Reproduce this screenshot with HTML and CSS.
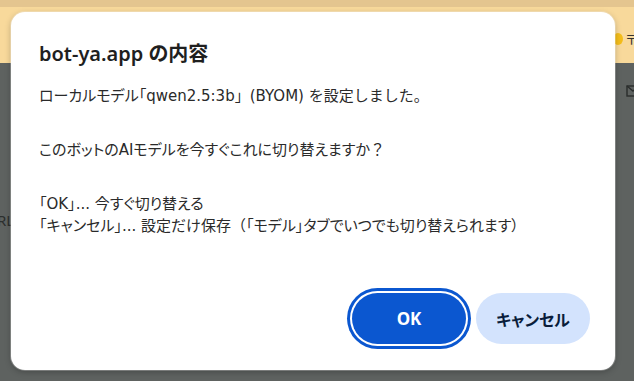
FILE: index.html
```html
<!DOCTYPE html>
<html lang="ja">
<head>
<meta charset="utf-8">
<title>bot-ya.app</title>
<link rel="stylesheet" href="styles.css">
</head>
<body>
<div class="page">
  <div class="topband"></div>
  <div class="banner">
    <span class="banner-dot"></span>
    <span class="banner-glyph">〒</span>
  </div>
  <div class="main">
    <span class="side-label">RL</span>
    <svg class="mail-icon" width="14" height="12" viewBox="0 0 14 12"><rect x="1" y="1" width="12" height="10" fill="none" stroke="#2a2d2c" stroke-width="1.4"/><path d="M1 1 L7 6 L13 1" fill="none" stroke="#2a2d2c" stroke-width="1.4"/></svg>
  </div>
</div>

<div class="dialog" role="alertdialog">
  <h1 class="dialog-title">bot-ya.app の内容</h1>
  <div class="dialog-body">
    <div class="line">ローカルモデル「qwen2.5:3b<span class="full">」</span>(BYOM) <span class="full">を設定しました。</span></div>
    <div class="blank"></div>
    <div class="line">このボットのAIモデルを今すぐこれに切り替えますか<span class="full">？</span></div>
    <div class="blank"></div>
    <div class="line">「OK」... 今すぐ切り替える</div>
    <div class="line">「キャンセル」... <span class="full">設定だけ</span>保存<span class="full">（</span>「モデル」タブでいつでも切り替えられます）</div>
  </div>
  <div class="dialog-actions">
    <button class="btn btn-ok">OK</button>
    <button class="btn btn-cancel">キャンセル</button>
  </div>
</div>
</body>
</html>
```

FILE: styles.css
```css
html, body {
  margin: 0;
  padding: 0;
}
body {
  width: 634px;
  height: 381px;
  overflow: hidden;
  position: relative;
  font-family: "Noto Sans", "Noto Sans CJK JP", sans-serif;
  background: #5e6260;
}
.page {
  display: flex;
  flex-direction: column;
  height: 381px;
}
.topband {
  height: 7px;
  background: #e4c58f;
}
.banner {
  height: 56px;
  background: #f8d99b;
  position: relative;
}
.banner-dot {
  position: absolute;
  left: 613px;
  top: 26px;
  width: 10px;
  height: 12px;
  border-radius: 50%;
  background: #f4bd1a;
}
.banner-glyph {
  position: absolute;
  left: 625px;
  top: 22px;
  font-size: 13px;
  color: #333;
}
.main {
  flex: 1;
  background: #5e6260;
  position: relative;
}
.side-label {
  position: absolute;
  left: -3px;
  top: 147px;
  font-size: 15px;
  color: #2c2f2e;
}
.mail-icon {
  position: absolute;
  left: 626px;
  top: 22px;
}
.dialog {
  position: absolute;
  left: 11px;
  top: 12px;
  width: 604px;
  height: 358px;
  box-sizing: border-box;
  background: #ffffff;
  border-radius: 14px;
  box-shadow: 0 0 0 1px rgba(255,255,255,0.25), 0 2px 6px rgba(0,0,0,0.25);
  padding: 28px 25px 26px 28px;
  display: flex;
  flex-direction: column;
}
.dialog-title {
  margin: 0;
  font-size: 20px;
  font-weight: 600;
  line-height: 28px;
  color: #1f1f1f;
  font-feature-settings: "palt";
}
.dialog-body {
  margin-top: 17px;
  font-family: "DejaVu Sans", "Noto Sans CJK JP", sans-serif;
  font-size: 15px;
  line-height: 22px;
  color: #2a2a2a;
  flex: 1;
  font-feature-settings: "palt";
}
.full {
  font-feature-settings: normal;
}
.blank {
  height: 32px;
}
.dialog-actions {
  display: flex;
  justify-content: flex-end;
  gap: 10px;
}
.btn {
  width: 114px;
  height: 51px;
  border: none;
  border-radius: 26px;
  font-family: "Noto Sans", "Noto Sans CJK JP", sans-serif;
  font-size: 16px;
  font-weight: 700;
  cursor: pointer;
  font-feature-settings: "palt";
}
.btn-ok {
  background: #0b57d0;
  color: #ffffff;
  font-size: 17px;
  box-shadow: 0 0 0 2px #ffffff, 0 0 0 5px #0b57d0;
}
.btn-cancel {
  background: #d3e3fd;
  color: #0a1d3b;
}
```
